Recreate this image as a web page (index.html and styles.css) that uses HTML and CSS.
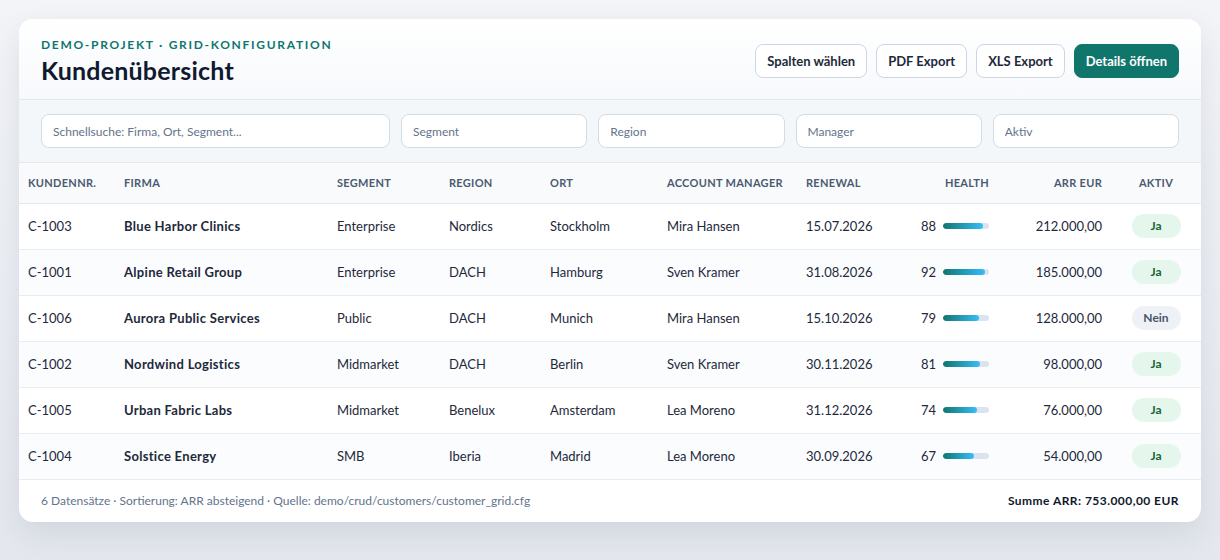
FILE: index.html
```html
<!DOCTYPE html>
<html lang="de">
<head>
    <meta charset="UTF-8">
    <meta name="viewport" content="width=device-width, initial-scale=1.0">
    <title>Kundenübersicht</title>
    <link rel="stylesheet" href="styles.css">
</head>
<body>

<div class="card">
    <!-- Kopfbereich -->
    <header class="card-header">
        <div class="title-block">
            <div class="eyebrow">Demo-Projekt · Grid-Konfiguration</div>
            <h1>Kundenübersicht</h1>
        </div>
        <div class="actions">
            <button class="btn">Spalten wählen</button>
            <button class="btn">PDF Export</button>
            <button class="btn">XLS Export</button>
            <button class="btn btn-primary">Details öffnen</button>
        </div>
    </header>

    <!-- Filter -->
    <div class="filters">
        <input type="text" placeholder="Schnellsuche: Firma, Ort, Segment...">
        <input type="text" placeholder="Segment">
        <input type="text" placeholder="Region">
        <input type="text" placeholder="Manager">
        <input type="text" placeholder="Aktiv">
    </div>

    <table class="grid">
        <colgroup>
            <col style="width: 96px">
            <col style="width: 213px">
            <col style="width: 112px">
            <col style="width: 101px">
            <col style="width: 117px">
            <col style="width: 139px">
            <col style="width: 100px">
            <col style="width: 101px">
            <col style="width: 113px">
            <col style="width: 90px">
        </colgroup>
        <thead>
            <tr>
                <th>Kundennr.</th>
                <th>Firma</th>
                <th>Segment</th>
                <th>Region</th>
                <th>Ort</th>
                <th>Account Manager</th>
                <th>Renewal</th>
                <th class="num">Health</th>
                <th class="num">ARR EUR</th>
                <th class="center">Aktiv</th>
            </tr>
        </thead>
        <tbody>
            <tr>
                <td>C-1003</td>
                <td class="firm">Blue Harbor Clinics</td>
                <td>Enterprise</td>
                <td>Nordics</td>
                <td>Stockholm</td>
                <td>Mira Hansen</td>
                <td>15.07.2026</td>
                <td class="num"><span class="health">88 <span class="bar"><span class="fill" style="width: 88%"></span></span></span></td>
                <td class="num">212.000,00</td>
                <td class="center"><span class="pill yes">Ja</span></td>
            </tr>
            <tr>
                <td>C-1001</td>
                <td class="firm">Alpine Retail Group</td>
                <td>Enterprise</td>
                <td>DACH</td>
                <td>Hamburg</td>
                <td>Sven Kramer</td>
                <td>31.08.2026</td>
                <td class="num"><span class="health">92 <span class="bar"><span class="fill" style="width: 92%"></span></span></span></td>
                <td class="num">185.000,00</td>
                <td class="center"><span class="pill yes">Ja</span></td>
            </tr>
            <tr>
                <td>C-1006</td>
                <td class="firm">Aurora Public Services</td>
                <td>Public</td>
                <td>DACH</td>
                <td>Munich</td>
                <td>Mira Hansen</td>
                <td>15.10.2026</td>
                <td class="num"><span class="health">79 <span class="bar"><span class="fill" style="width: 79%"></span></span></span></td>
                <td class="num">128.000,00</td>
                <td class="center"><span class="pill no">Nein</span></td>
            </tr>
            <tr>
                <td>C-1002</td>
                <td class="firm">Nordwind Logistics</td>
                <td>Midmarket</td>
                <td>DACH</td>
                <td>Berlin</td>
                <td>Sven Kramer</td>
                <td>30.11.2026</td>
                <td class="num"><span class="health">81 <span class="bar"><span class="fill" style="width: 81%"></span></span></span></td>
                <td class="num">98.000,00</td>
                <td class="center"><span class="pill yes">Ja</span></td>
            </tr>
            <tr>
                <td>C-1005</td>
                <td class="firm">Urban Fabric Labs</td>
                <td>Midmarket</td>
                <td>Benelux</td>
                <td>Amsterdam</td>
                <td>Lea Moreno</td>
                <td>31.12.2026</td>
                <td class="num"><span class="health">74 <span class="bar"><span class="fill" style="width: 74%"></span></span></span></td>
                <td class="num">76.000,00</td>
                <td class="center"><span class="pill yes">Ja</span></td>
            </tr>
            <tr>
                <td>C-1004</td>
                <td class="firm">Solstice Energy</td>
                <td>SMB</td>
                <td>Iberia</td>
                <td>Madrid</td>
                <td>Lea Moreno</td>
                <td>30.09.2026</td>
                <td class="num"><span class="health">67 <span class="bar"><span class="fill" style="width: 67%"></span></span></span></td>
                <td class="num">54.000,00</td>
                <td class="center"><span class="pill yes">Ja</span></td>
            </tr>
        </tbody>
    </table>

    <footer class="card-footer">
        <span>6 Datensätze · Sortierung: ARR absteigend · Quelle: demo/crud/customers/customer_grid.cfg</span>
        <strong>Summe ARR: 753.000,00 EUR</strong>
    </footer>
</div>

</body>
</html>
```

FILE: styles.css
```css
* {
    box-sizing: border-box;
}

body {
    font-family: 'Lato', 'Noto Sans', sans-serif;
    background: linear-gradient(180deg, #f2f4f8, #e4e8ee);
    margin: 0;
    padding: 19px;
    height: 560px;
    color: #1e293b;
}

/* Karte */
.card {
    width: 1182px;
    background: #fff;
    border-radius: 14px;
    box-shadow: 0 12px 32px rgba(15, 23, 42, 0.09);
    overflow: hidden;
}

.card-header {
    display: flex;
    justify-content: space-between;
    align-items: center;
    padding: 18px 22px 15px;
    background: linear-gradient(180deg, #ffffff, #f7f9fc);
    border-bottom: 1px solid #e3e8ef;
}

.eyebrow {
    font-size: 12px;
    line-height: 16px;
    font-weight: 700;
    letter-spacing: 1.7px;
    text-transform: uppercase;
    color: #0f766e;
}

h1 {
    margin: 3px 0 0;
    font-size: 25px;
    line-height: 28px;
    font-weight: 700;
    letter-spacing: 0.2px;
    color: #0f1a30;
}

.actions {
    display: flex;
    gap: 9px;
}

.btn {
    height: 34px;
    padding: 0 11px;
    border: 1px solid #cdd6e2;
    border-radius: 8px;
    background: #fff;
    color: #1e293b;
    font-family: inherit;
    font-size: 13px;
    font-weight: 700;
}

.btn-primary {
    background: #10766c;
    border-color: #10766c;
    color: #fff;
}

/* Filter */
.filters {
    display: grid;
    grid-template-columns: 349px repeat(4, minmax(0, 1fr));
    gap: 11px;
    padding: 14px 22px;
    background: #f4f7fa;
    border-bottom: 1px solid #e3e8ef;
}

.filters input {
    width: 100%;
    height: 34px;
    padding: 0 11px;
    border: 1px solid #d3dbe6;
    border-radius: 8px;
    background: #fff;
    font-family: inherit;
    font-size: 12px;
    color: #1e293b;
}

.filters input::placeholder {
    color: #64748b;
}

/* Tabelle */
.grid {
    width: 100%;
    border-collapse: collapse;
    table-layout: fixed;
    font-size: 13px;
}

.grid th {
    height: 40px;
    padding: 0 9px;
    text-align: left;
    font-size: 11px;
    font-weight: 700;
    letter-spacing: 0.3px;
    text-transform: uppercase;
    color: #4a5a70;
    background: #f8fafc;
    border-bottom: 1px solid #e3e8ef;
    white-space: nowrap;
}

.grid td {
    height: 46px;
    padding: 0 9px;
    border-bottom: 1px solid #e8edf3;
    white-space: nowrap;
}

.grid tbody tr:nth-child(even) td {
    background: #fafcfe;
}

.grid .num {
    text-align: right;
}

.grid .center {
    text-align: center;
}

.grid .firm {
    font-weight: 700;
    letter-spacing: 0.3px;
}

.health {
    display: inline-flex;
    align-items: center;
    gap: 7px;
}

.bar {
    display: inline-block;
    width: 46px;
    height: 6px;
    border-radius: 3px;
    background: #dbe4ee;
    overflow: hidden;
}

.fill {
    display: block;
    height: 100%;
    border-radius: 3px;
    background: linear-gradient(90deg, #0f766e, #38bdf8);
}

.pill {
    display: inline-block;
    min-width: 49px;
    height: 24px;
    line-height: 24px;
    padding: 0 10px;
    border-radius: 12px;
    font-size: 12px;
    font-weight: 700;
}

.pill.yes {
    background: #e5f6ec;
    color: #166534;
}

.pill.no {
    background: #eef2f7;
    color: #475569;
}

/* Fußzeile */
.card-footer {
    display: flex;
    justify-content: space-between;
    align-items: center;
    height: 42px;
    padding: 0 22px;
    font-size: 12px;
    color: #64748b;
}

.card-footer strong {
    color: #0f172a;
    letter-spacing: 0.45px;
}
```
